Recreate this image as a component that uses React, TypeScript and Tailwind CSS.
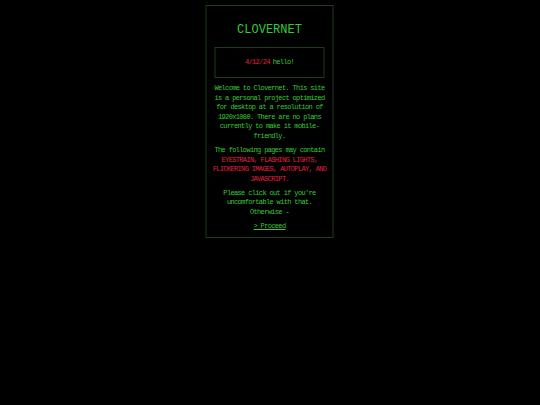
export default function App() {
  const mono = { fontFamily: '"Liberation Mono", "Courier New", monospace' };
  return (
    <div className="min-h-[405px] w-full bg-black pt-[5px]" style={mono}>
      <div className="mx-auto flex w-[128px] translate-x-[-0.5px] flex-col border border-[#1c3a1c] px-[4px] pb-[6px] text-[#33cc33]">
        <h1 className="mt-[16px] text-center text-[12px] leading-[16px] text-[#33cc33]">CLOVERNET</h1>
        <div className="mx-[4px] mt-[9px] flex h-[31px] items-center justify-center border border-[#1c3a1c] text-[7px] tracking-[-0.65px]">
          <span className="text-[#e0203c]">4/12/24</span>
          <span className="ml-[3px]">hello!</span>
        </div>
        <div className="mt-[6px] text-center text-[7px] leading-[9.6px] tracking-[-0.65px]">
          <p>
            Welcome to Clovernet. This site is a personal project optimized for desktop at a
            resolution of 1920x1080. There are no plans currently to make it mobile-friendly.
          </p>
          <p className="mt-[4.4px]">
            The following pages may contain{" "}
            <span className="text-[#e0203c]">
              EYESTRAIN, FLASHING LIGHTS, FLICKERING IMAGES, AUTOPLAY, AND JAVASCRIPT.
            </span>
          </p>
          <p className="mt-[4.4px]">
            Please click out if you're uncomfortable with that. Otherwise -
          </p>
          <p className="mt-[4.4px]">
            <a href="#" className="underline">&gt; Proceed</a>
          </p>
        </div>
      </div>
    </div>
  );
}
